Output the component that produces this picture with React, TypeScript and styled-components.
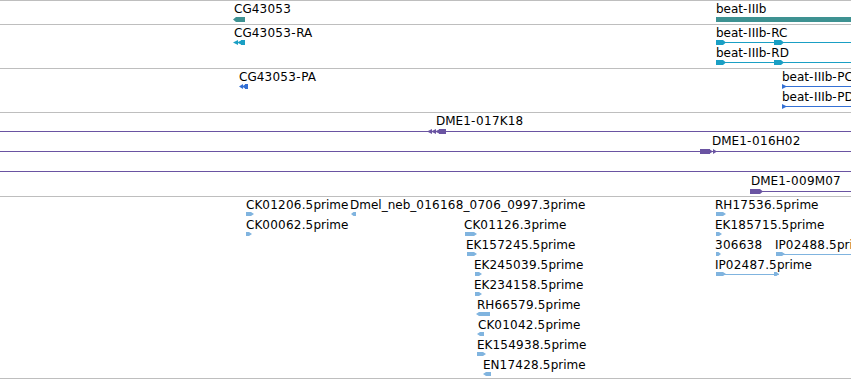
import React from "react";
import styled, { createGlobalStyle } from "styled-components";

const Global = createGlobalStyle`
  html, body { margin: 0; padding: 0; background: #ffffff; }
  body { font-family: "DejaVu Sans", Verdana, sans-serif; }
`;

const View = styled.div`
  width: 851px;
  height: 380px;
  overflow: hidden;
  background: #ffffff;
  display: flex;
  flex-direction: column;
`;

const Track = styled.div<{ $h: number }>`
  position: relative;
  box-sizing: border-box;
  flex: 0 0 ${(p) => p.$h}px;
  height: ${(p) => p.$h}px;
  border-top: 1px solid #bebebe;
  overflow: hidden;
`;

const Label = styled.div<{ $x: number; $row: number }>`
  position: absolute;
  left: ${(p) => p.$x}px;
  top: ${(p) => p.$row * 20 + 1}px;
  font-family: "DejaVu Sans", Verdana, sans-serif;
  font-size: 12px;
  line-height: 14px;
  color: #000000;
  white-space: nowrap;
`;

const Num = styled.span`
  letter-spacing: 0.25px;
`;

const Dash = styled.span`
  letter-spacing: 0.7px;
`;

const Glyph = styled.svg<{ $x: number; $row: number; $top: number }>`
  position: absolute;
  display: block;
  left: ${(p) => p.$x}px;
  top: ${(p) => p.$row * 20 + p.$top}px;
  overflow: visible;
  shape-rendering: crispEdges;
`;

type Part =
  | { k: "line" }
  | { k: "rect"; x: number; w: number }
  | { k: "arrowR"; x: number; w: number }
  | { k: "arrowL"; x: number; w: number }
  | { k: "triR"; x: number; w: number }
  | { k: "triL"; x: number; w: number };

type Feature = {
  label?: string;
  lx?: number;
  row: number;
  gx: number;
  w: number;
  parts: Part[];
};

type TrackSpec = {
  h: number;
  color: string;
  glyphTop: number;
  glyphH: number;
  features: Feature[];
};

function labelText(text: string) {
  return text.split(/(\d+|-)/).map((s, i) => {
    if (/^\d+$/.test(s)) return <Num key={i}>{s}</Num>;
    if (s === "-") return <Dash key={i}>{s}</Dash>;
    return <React.Fragment key={i}>{s}</React.Fragment>;
  });
}

function drawPart(p: Part, h: number, color: string, i: number) {
  const m = h / 2;
  switch (p.k) {
    case "line":
      return <rect key={i} x={0} y={Math.floor(m)} width="100%" height={1} fill={color} />;
    case "rect":
      return <rect key={i} x={p.x} y={0} width={p.w} height={h} fill={color} />;
    case "arrowR": {
      const t = Math.min(3, p.w / 2);
      return (
        <polygon
          key={i}
          points={`${p.x},0 ${p.x + p.w - t},0 ${p.x + p.w},${m} ${p.x + p.w - t},${h} ${p.x},${h}`}
          fill={color}
          shapeRendering="auto"
        />
      );
    }
    case "arrowL": {
      const t = Math.min(3, p.w / 2);
      return (
        <polygon
          key={i}
          points={`${p.x},${m} ${p.x + t},0 ${p.x + p.w},0 ${p.x + p.w},${h} ${p.x + t},${h}`}
          fill={color}
          shapeRendering="auto"
        />
      );
    }
    case "triR":
      return (
        <polygon
          key={i}
          points={`${p.x},0 ${p.x + p.w},${m} ${p.x},${h}`}
          fill={color}
          shapeRendering="auto"
        />
      );
    case "triL":
      return (
        <polygon
          key={i}
          points={`${p.x},${m} ${p.x + p.w},0 ${p.x + p.w},${h}`}
          fill={color}
          shapeRendering="auto"
        />
      );
  }
}

const tracks: TrackSpec[] = [
  {
    h: 24,
    color: "#3e9292",
    glyphTop: 16,
    glyphH: 5,
    features: [
      { label: "CG43053", lx: 234, row: 0, gx: 233, w: 12, parts: [{ k: "arrowL", x: 0, w: 12 }] },
      { label: "beat-IIIb", lx: 716, row: 0, gx: 716, w: 135, parts: [{ k: "rect", x: 0, w: 135 }] },
    ],
  },
  {
    h: 44,
    color: "#1a9fc4",
    glyphTop: 15,
    glyphH: 5,
    features: [
      {
        label: "CG43053-RA",
        lx: 234,
        row: 0,
        gx: 233,
        w: 12,
        parts: [
          { k: "triL", x: 0, w: 5 },
          { k: "triL", x: 4, w: 5 },
          { k: "rect", x: 8, w: 4 },
        ],
      },
      {
        label: "beat-IIIb-RC",
        lx: 716,
        row: 0,
        gx: 716,
        w: 135,
        parts: [{ k: "line" }, { k: "arrowR", x: 0, w: 10 }, { k: "arrowR", x: 58, w: 10 }],
      },
      {
        label: "beat-IIIb-RD",
        lx: 716,
        row: 1,
        gx: 716,
        w: 135,
        parts: [{ k: "line" }, { k: "arrowR", x: 0, w: 10 }, { k: "arrowR", x: 58, w: 10 }],
      },
    ],
  },
  {
    h: 44,
    color: "#3470d4",
    glyphTop: 15,
    glyphH: 5,
    features: [
      {
        label: "CG43053-PA",
        lx: 239,
        row: 0,
        gx: 239,
        w: 9,
        parts: [
          { k: "triL", x: 0, w: 4 },
          { k: "triL", x: 3, w: 4 },
          { k: "rect", x: 6, w: 3 },
        ],
      },
      { label: "beat-IIIb-PC", lx: 782, row: 0, gx: 782, w: 69, parts: [{ k: "line" }, { k: "triR", x: 0, w: 5 }] },
      { label: "beat-IIIb-PD", lx: 782, row: 1, gx: 782, w: 69, parts: [{ k: "line" }, { k: "triR", x: 0, w: 5 }] },
    ],
  },
  {
    h: 84,
    color: "#6a54a2",
    glyphTop: 16,
    glyphH: 5,
    features: [
      { row: 0, gx: 0, w: 851, parts: [{ k: "line" }] },
      {
        label: "DME1-017K18",
        lx: 436,
        row: 0,
        gx: 427,
        w: 19,
        parts: [
          { k: "triL", x: 0, w: 5 },
          { k: "triL", x: 4, w: 5 },
          { k: "triL", x: 8, w: 5 },
          { k: "rect", x: 12, w: 7 },
        ],
      },
      { row: 1, gx: 0, w: 851, parts: [{ k: "line" }] },
      {
        label: "DME1-016H02",
        lx: 712,
        row: 1,
        gx: 700,
        w: 17,
        parts: [
          { k: "rect", x: 0, w: 10 },
          { k: "triR", x: 9, w: 4 },
          { k: "triR", x: 13, w: 4 },
        ],
      },
      { row: 2, gx: 0, w: 851, parts: [{ k: "line" }] },
      {
        label: "DME1-009M07",
        lx: 751,
        row: 3,
        gx: 750,
        w: 101,
        parts: [{ k: "line" }, { k: "arrowR", x: 0, w: 13 }],
      },
    ],
  },
  {
    h: 182,
    color: "#80b4df",
    glyphTop: 15,
    glyphH: 4,
    features: [
      { label: "CK01206.5prime", lx: 246, row: 0, gx: 246, w: 8, parts: [{ k: "arrowR", x: 0, w: 8 }] },
      { label: "Dmel_neb_016168_0706_0997.3prime", lx: 350, row: 0, gx: 351, w: 5, parts: [{ k: "arrowL", x: 0, w: 5 }] },
      { label: "RH17536.5prime", lx: 715, row: 0, gx: 716, w: 10, parts: [{ k: "arrowR", x: 0, w: 10 }] },
      { label: "CK00062.5prime", lx: 246, row: 1, gx: 246, w: 6, parts: [{ k: "arrowR", x: 0, w: 6 }] },
      { label: "CK01126.3prime", lx: 464, row: 1, gx: 465, w: 12, parts: [{ k: "arrowR", x: 0, w: 12 }] },
      { label: "EK185715.5prime", lx: 715, row: 1, gx: 716, w: 6, parts: [{ k: "arrowR", x: 0, w: 6 }] },
      { label: "EK157245.5prime", lx: 466, row: 2, gx: 467, w: 10, parts: [{ k: "arrowR", x: 0, w: 10 }] },
      { label: "306638", lx: 715, row: 2, gx: 716, w: 5, parts: [{ k: "arrowR", x: 0, w: 5 }] },
      {
        label: "IP02488.5prime",
        lx: 775,
        row: 2,
        gx: 776,
        w: 75,
        parts: [{ k: "line" }, { k: "arrowR", x: 0, w: 9 }],
      },
      { label: "EK245039.5prime", lx: 474, row: 3, gx: 475, w: 7, parts: [{ k: "arrowR", x: 0, w: 7 }] },
      {
        label: "IP02487.5prime",
        lx: 715,
        row: 3,
        gx: 716,
        w: 63,
        parts: [{ k: "line" }, { k: "arrowR", x: 0, w: 10 }, { k: "arrowR", x: 58, w: 5 }],
      },
      { label: "EK234158.5prime", lx: 474, row: 4, gx: 475, w: 7, parts: [{ k: "arrowR", x: 0, w: 7 }] },
      { label: "RH66579.5prime", lx: 477, row: 5, gx: 476, w: 14, parts: [{ k: "arrowL", x: 0, w: 14 }] },
      { label: "CK01042.5prime", lx: 478, row: 6, gx: 477, w: 7, parts: [{ k: "arrowL", x: 0, w: 7 }] },
      { label: "EK154938.5prime", lx: 477, row: 7, gx: 477, w: 9, parts: [{ k: "arrowR", x: 0, w: 9 }] },
      { label: "EN17428.5prime", lx: 483, row: 8, gx: 483, w: 8, parts: [{ k: "arrowL", x: 0, w: 8 }] },
    ],
  },
];

export default function App() {
  return (
    <>
      <Global />
      <View>
        {tracks.map((t, ti) => (
          <Track key={ti} $h={t.h}>
            {t.features.map((f, fi) => (
              <React.Fragment key={fi}>
                <Glyph
                  $x={f.gx}
                  $row={f.row}
                  $top={t.glyphTop}
                  width={f.w}
                  height={t.glyphH}
                  viewBox={`0 0 ${f.w} ${t.glyphH}`}
                >
                  {f.parts.map((p, pi) => drawPart(p, t.glyphH, t.color, pi))}
                </Glyph>
                {f.label && (
                  <Label $x={f.lx ?? f.gx} $row={f.row}>
                    {labelText(f.label)}
                  </Label>
                )}
              </React.Fragment>
            ))}
          </Track>
        ))}
        <Track $h={2} />
      </View>
    </>
  );
}
